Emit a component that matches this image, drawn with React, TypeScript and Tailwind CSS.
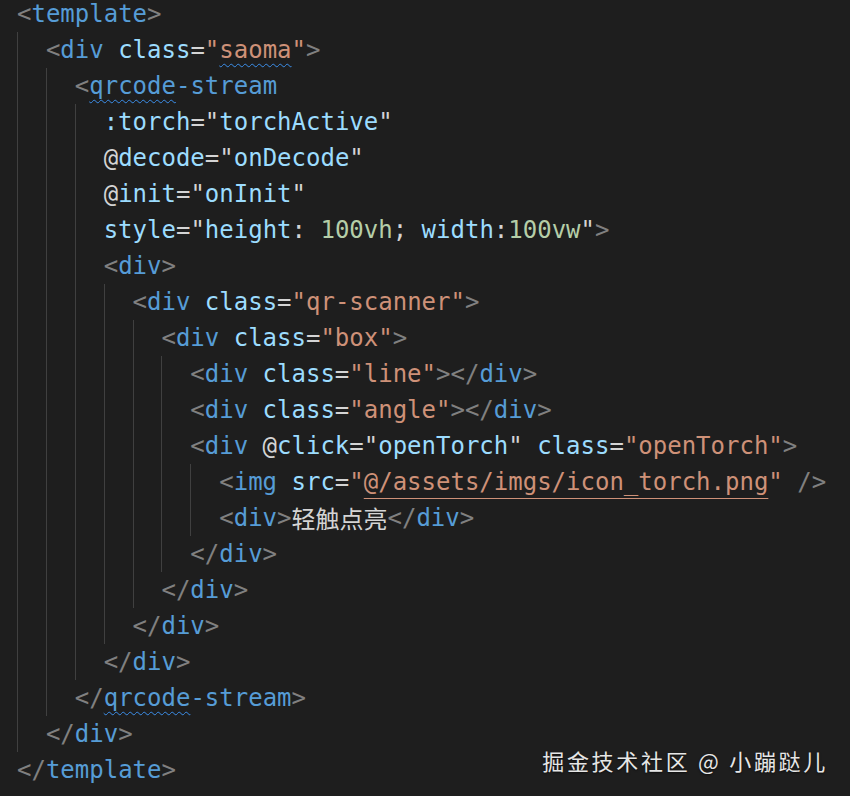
type Tok = [string, string];

const B = "text-[#808080]"; // brackets
const T = "text-[#569cd6]"; // tag names
const A = "text-[#9cdcfe]"; // attributes / expressions
const S = "text-[#ce9178]"; // strings
const W = "text-[#d4d4d4]"; // plain text
const N = "text-[#b5cea8]"; // numbers
const SQ = "underline decoration-wavy decoration-[#3b8eea] decoration-1 underline-offset-[5px]";

const lines: { level: number; toks: Tok[] }[] = [
  { level: 0, toks: [["<", B], ["template", T], [">", B]] },
  {
    level: 1,
    toks: [
      ["<", B], ["div", T], [" ", W], ["class", A], ["=", W], ['"', S],
      ["saoma", `${S} ${SQ}`], ['"', S], [">", B],
    ],
  },
  { level: 2, toks: [["<", B], ["qrcode", `${T} ${SQ}`], ["-stream", T]] },
  { level: 3, toks: [[":torch", A], ["=", W], ['"', W], ["torchActive", A], ['"', W]] },
  { level: 3, toks: [["@", W], ["decode", A], ["=", W], ['"', W], ["onDecode", A], ['"', W]] },
  { level: 3, toks: [["@", W], ["init", A], ["=", W], ['"', W], ["onInit", A], ['"', W]] },
  {
    level: 3,
    toks: [
      ["style", A], ["=", W], ['"', W], ["height", A], [": ", W], ["100vh", N], ["; ", W],
      ["width", A], [":", W], ["100vw", N], ['"', W], [">", B],
    ],
  },
  { level: 3, toks: [["<", B], ["div", T], [">", B]] },
  {
    level: 4,
    toks: [["<", B], ["div", T], [" ", W], ["class", A], ["=", W], ['"qr-scanner"', S], [">", B]],
  },
  {
    level: 5,
    toks: [["<", B], ["div", T], [" ", W], ["class", A], ["=", W], ['"box"', S], [">", B]],
  },
  {
    level: 6,
    toks: [
      ["<", B], ["div", T], [" ", W], ["class", A], ["=", W], ['"line"', S], ["></", B],
      ["div", T], [">", B],
    ],
  },
  {
    level: 6,
    toks: [
      ["<", B], ["div", T], [" ", W], ["class", A], ["=", W], ['"angle"', S], ["></", B],
      ["div", T], [">", B],
    ],
  },
  {
    level: 6,
    toks: [
      ["<", B], ["div", T], [" ", W], ["@", W], ["click", A], ["=", W], ['"', W], ["openTorch", A],
      ['"', W], [" ", W], ["class", A], ["=", W], ['"openTorch"', S], [">", B],
    ],
  },
  {
    level: 7,
    toks: [
      ["<", B], ["img", T], [" ", W], ["src", A], ["=", W], ['"', S],
      ["@/assets/imgs/icon_torch.png", `${S} underline decoration-[#ce9178] decoration-1 underline-offset-[8px]`],
      ['"', S], [" />", B],
    ],
  },
  { level: 7, toks: [["<", B], ["div", T], [">", B], ["轻触点亮", "cjk"], ["</", B], ["div", T], [">", B]] },
  { level: 6, toks: [["</", B], ["div", T], [">", B]] },
  { level: 5, toks: [["</", B], ["div", T], [">", B]] },
  { level: 4, toks: [["</", B], ["div", T], [">", B]] },
  { level: 3, toks: [["</", B], ["div", T], [">", B]] },
  { level: 2, toks: [["</", B], ["qrcode", `${T} ${SQ}`], ["-stream", T], [">", B]] },
  { level: 1, toks: [["</", B], ["div", T], [">", B]] },
  { level: 0, toks: [["</", B], ["template", T], [">", B]] },
];

function Line({ level, toks }: { level: number; toks: Tok[] }) {
  return (
    <div className="flex h-[36px] items-center whitespace-pre">
      {Array.from({ length: level }).map((_, i) => (
        <span key={i} className="h-full w-[28.9px] shrink-0 border-l border-[#404040]" />
      ))}
      {toks.map(([txt, cls], i) =>
        cls === "cjk" ? (
          <span
            key={i}
            className="text-[24px] text-[#d4d4d4] font-['Noto_Sans_CJK_SC',sans-serif]"
          >
            {txt}
          </span>
        ) : (
          <span key={i} className={cls}>
            {txt}
          </span>
        )
      )}
    </div>
  );
}

export default function App() {
  return (
    <div className="relative h-[796px] w-[850px] overflow-hidden bg-[#1e1e1e] font-['DejaVu_Sans_Mono','Noto_Sans_CJK_SC',monospace] text-[24px] leading-[36px]">
      <div className="mt-[-4px] pl-[17px]">
        {lines.map((l, i) => (
          <Line key={i} level={l.level} toks={l.toks} />
        ))}
      </div>
      <div className="absolute bottom-[22px] right-[22px] text-[22px] leading-[28px] tracking-[2.7px] text-[#e6e6e6] font-['Noto_Sans_CJK_SC',sans-serif] [text-shadow:0_1px_2px_rgba(0,0,0,0.6)]">
        掘金技术社区 @ 小蹦跶儿
      </div>
    </div>
  );
}
